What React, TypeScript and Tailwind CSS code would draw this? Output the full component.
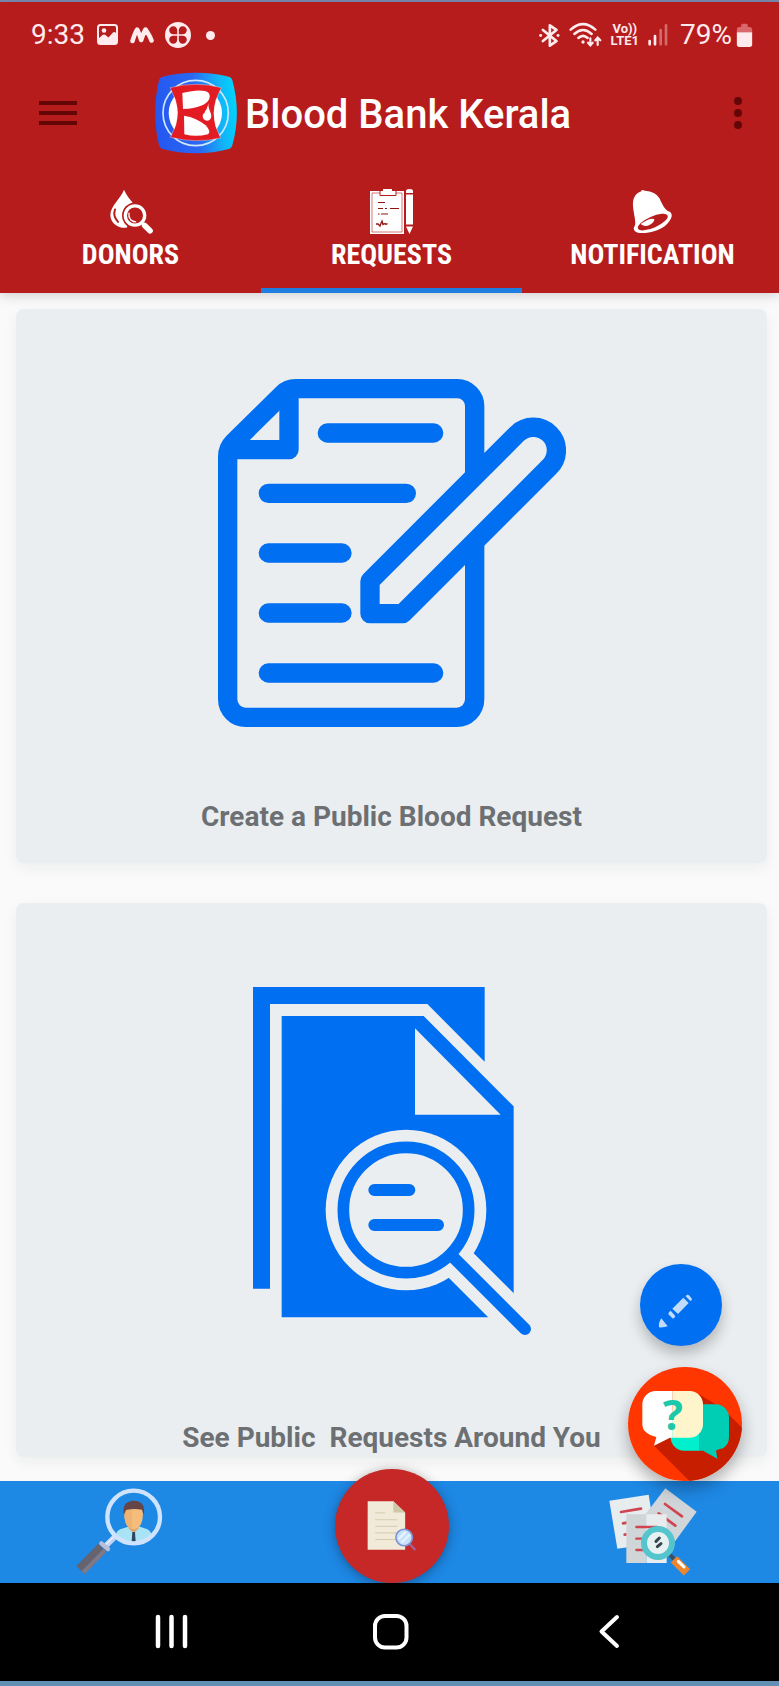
import type { ReactNode } from "react";

function PictureIcon() {
  return (
    <svg viewBox="0 0 22 22" className="size-[22px]" aria-hidden="true">
      <rect x="1" y="1" width="19" height="19" rx="2.5" fill="none" stroke="#ffebee" strokeWidth="2" />
      <path d="M1 1h19v10l-2-2.500c-1-1-2-.5-3 .5l-3.500 4-3-2.500c-1-1-2-.5-3 .5L1 14z" fill="none" />
      <path d="M1 20v-5l4.500-4c1-.8 2-.8 3 0l3 2.500 4-4.500c1-1 2-1.500 3-.5l1.500 1.500v10z" fill="#ffebee" transform="translate(0 0)" />
      <circle cx="7" cy="6.500" r="2.300" fill="#ffebee" />
    </svg>
  );
}

function WaveIcon() {
  return (
    <svg viewBox="0 0 24 20" className="h-5 w-6" aria-hidden="true">
      <path d="M2.500 16C4 11 5.500 7 7.200 4.500c1.500 3 2.800 6.500 4 10.500C12.500 11 14 7 15.500 4.500 17.500 7.500 20 11 21.500 15.500" fill="none" stroke="#ffebee" strokeWidth="4.500" strokeLinecap="round" strokeLinejoin="round" />
    </svg>
  );
}

function CloverIcon() {
  return (
    <svg viewBox="0 0 26 26" className="size-[26px]" aria-hidden="true">
      <circle cx="13" cy="13" r="13" fill="#ffebee" />
      <g fill="#b71c1c">
        <path d="M12.200 12.200H8.500A4 4 0 1 1 12.200 8.500z" />
        <path d="M13.800 12.200V8.500A4 4 0 1 1 17.500 12.200z" />
        <path d="M12.200 13.800V17.500A4 4 0 1 1 8.500 13.800z" />
        <path d="M13.800 13.800H17.500A4 4 0 1 1 13.800 17.500z" />
      </g>
    </svg>
  );
}

function BluetoothIcon() {
  return (
    <svg viewBox="462 72 62 70" className="h-[23px] w-[21px]" aria-hidden="true">
      <path d="M473 90L514 124 494 138V76L514 90 473 124" fill="none" stroke="#ffebee" strokeWidth="8" strokeLinejoin="round" strokeLinecap="round" />
      <circle cx="466" cy="107" r="4.500" fill="#ffebee" />
      <circle cx="519" cy="107" r="4.500" fill="#ffebee" />
    </svg>
  );
}

function WifiIcon() {
  return (
    <svg viewBox="553 66 99 78" className="h-[26px] w-[33px]" aria-hidden="true">
      <g fill="none" stroke="#ffebee" strokeWidth="7.500" strokeLinecap="round">
        <path d="M558 89Q595 56 632 89" />
        <path d="M569 102Q595 78 621 102" />
        <path d="M581 114Q595 101 609 114" />
      </g>
      <circle cx="595" cy="126" r="5" fill="#ffebee" />
      <path d="M617 115v20M610 128l7 8 7-8M639 135v-20M632 121l7-8 8 8" fill="none" stroke="#ffebee" strokeWidth="6.500" strokeLinecap="round" />
    </svg>
  );
}

function SignalIcon() {
  return (
    <svg viewBox="782 74 60 66" className="h-[22px] w-5" aria-hidden="true">
      <g strokeWidth="8" strokeLinecap="round" stroke="#ffebee">
        <path d="M787 125v10M803 110v25" />
        <path d="M820 92v43M836 78v57" opacity=".38" />
      </g>
    </svg>
  );
}

function BatteryIcon() {
  return (
    <svg viewBox="1044 68 50 72" className="h-6 w-[17px]" aria-hidden="true">
      <path d="M1046 96V88q0-8 8-8h5v-5q0-5 5-5h10q5 0 5 5v5h5q8 0 8 8v8z" fill="#d9686b" />
      <path d="M1046 96h46v36q0 8-8 8h-30q-8 0-8-8z" fill="#ffebee" />
    </svg>
  );
}

function LogoIcon() {
  return (
    <svg viewBox="465 215 246 246" className="size-[82px] shrink-0" role="img" aria-label="Blood Bank Kerala logo">
      <defs>
        <linearGradient id="logo-bg" x1="0" x2="1" y1=".55" y2=".45">
          <stop offset="0" stopColor="#2457f0" />
          <stop offset=".5" stopColor="#2a68f2" />
          <stop offset=".8" stopColor="#12b4f8" />
          <stop offset="1" stopColor="#00d4ff" />
        </linearGradient>
      </defs>
      <path d="M485 230Q588 205 689 230 695 232 697 240 724 338 697 435 695 443 689 445 588 472 485 445 479 443 477 435 454 338 477 240 479 232 485 230z" fill="url(#logo-bg)" />
      <circle cx="587" cy="338" r="98" fill="none" stroke="#cfe6ff" strokeWidth="5" />
      <circle cx="586" cy="338" r="80" fill="#fff" />
      <path d="M510 262Q588 242 664 262 620 338 662 413 588 430 511 411 555 338 510 262z" fill="#e31b23" stroke="#fff" strokeOpacity=".5" strokeWidth="2" />
      <path d="M547 278Q590 267 615 272 633 276 628 295 617 322 549 326z" fill="#fff" />
      <path d="M552 346Q590 352 617 375 634 393 624 402 588 411 553 402z" fill="#fff" />
      <path d="M625 308C623 328 609 336 608 347A13 14 0 0 0 634 348C634 335 624 327 625 308z" fill="#fff" />
      <path d="M611 340q3-10 9-16" stroke="#e31b23" strokeWidth="3" fill="none" />
    </svg>
  );
}

function DonorsIcon() {
  return (
    <svg viewBox="326 60 132 134" className="h-[45px] w-11" aria-hidden="true">
      <path d="M371 62C362 88 330 110 330 138A41 39 0 0 0 380 175L398 102C388 90 378 78 371 62z" fill="#fff" />
      <path d="M344 121q-7 20 9 37" stroke="#b71c1c" strokeWidth="6" fill="none" strokeLinecap="round" />
      <circle cx="404" cy="139" r="39" fill="#b71c1c" />
      <circle cx="404" cy="139" r="29" fill="none" stroke="#fff" strokeWidth="10" />
      <path d="M386 132q-3 22 20 26M391 152l10 6" stroke="#fff" strokeWidth="4" fill="none" strokeLinecap="round" />
      <path d="M426 161l9 9" stroke="#fff" strokeWidth="8" />
      <path d="M433 169l16 16" stroke="#fff" strokeWidth="17" strokeLinecap="round" />
    </svg>
  );
}

function ClipboardIcon() {
  return (
    <svg viewBox="0 0 44 45" className="h-[45px] w-11" aria-hidden="true">
      <path d="M0 2h34v43H0z" fill="#fff" />
      <path d="M2 4h30v39H2z" fill="none" stroke="#b71c1c" strokeWidth=".6" />
      <path d="M10 1.500h16v5H10z" fill="#fff" stroke="#b71c1c" strokeWidth="1" />
      <path d="M13 0h9v4h-9z" fill="#fff" />
      <path d="M8 13.500h7M8 19.500h5M15 19.500h2M20 19.500h9M8 25h1.500M11 25h7" stroke="#8f1515" strokeWidth="1.100" />
      <path d="M6 35h2l2 2q1-3 2-5l1 3.500 2-1 1 1 1.500-1" fill="none" stroke="#8f1515" strokeWidth="1.300" />
      <path d="M36 2q0-2 3.500-2T43 2v2h-7zM36 5.500h7v30h-7zM36 37.500h7L39.500 45z" fill="#fff" />
    </svg>
  );
}

function BellIcon() {
  return (
    <svg viewBox="729 60 124 136" className="h-[45px] w-[41px]" aria-hidden="true">
      <path d="M755 68Q758 60 768 65 800 67 812 88C822 108 828 124 843 129 855 138 848 152 835 166 815 187 780 195 750 193 735 191 731 180 737 172 744 160 730 125 732 100 734 82 743 71 755 68z" fill="#fff" />
      <ellipse cx="792" cy="160" rx="49" ry="17" transform="rotate(-24 792 160)" fill="#b71c1c" />
      <path d="M755 166Q785 145 796 151 798 160 782 169 768 176 755 166z" fill="#fff" />
    </svg>
  );
}

function WriteDocumentIcon() {
  return (
    <svg viewBox="54 56 1044 1044" className="size-[348px]" aria-hidden="true">
      <g fill="none" stroke="#006ff2" strokeWidth="58" strokeLinejoin="round">
        <path d="M824 350V137A52 52 0 0 0 772 85H287Q264 85 248 101L100 247Q83 264 83 289V1017A54 54 0 0 0 137 1071H770A54 54 0 0 0 824 1017V550" />
        <path d="M267 90V268H90" />
        <path d="M510 662V760H608L1049 319A69 69 0 0 0 951 221z" />
        <path strokeLinecap="round" d="M382 218H701M205 399H619M205 578H426M205 758H426M205 938H701" />
      </g>
    </svg>
  );
}

function SearchDocumentIcon() {
  return (
    <svg viewBox="69 51 834 1044" className="h-[348px] w-[278px]" aria-hidden="true">
      <path d="M69 51H764V275L592 102H120V956H69z" fill="#006ff2" />
      <path d="M155 138H581L851 409V1042H155z" fill="#006ff2" />
      <path d="M555 175L812 434H555z" fill="#eaeef1" />
      <circle cx="528" cy="720" r="241" fill="#eaeef1" />
      <path d="M640 833L903 1096" stroke="#eaeef1" strokeWidth="105" />
      <circle cx="528" cy="720" r="188" fill="none" stroke="#006ff2" strokeWidth="35" />
      <path d="M666 858L885 1077M433 660H538M433 765H624" stroke="#006ff2" strokeWidth="36" strokeLinecap="round" />
    </svg>
  );
}

function PencilIcon() {
  return (
    <svg viewBox="175 161 102 102" className="size-[34px]" aria-hidden="true">
      <g fill="#c0dcfa">
        <path d="M185 234L204 258Q192 262 178 261 176 246 185 234z" />
        <path d="M213 211q-7 4-7 11l14 13q6-3 7-8z" />
        <path d="M251 172L267 188 235 221 218 205z" />
        <path d="M258 168q4-7 10-3l7 8q4 5-3 9z" />
      </g>
    </svg>
  );
}

function ChatIcon() {
  return (
    <svg viewBox="85 378 342 342" className="size-full" aria-hidden="true">
      <defs>
        <clipPath id="chat-disc"><circle cx="256" cy="549" r="171" /></clipPath>
      </defs>
      <g clipPath="url(#chat-disc)">
        <path d="M85 378h342v342H85z" fill="#ff3600" />
        <path d="M163 614L275 726H427V560L370 503 298 460z" fill="#c81e00" />
      </g>
      <path d="M300 490H253A40 40 0 0 0 213 530V589A40 40 0 0 0 253 629H300z" fill="#00f0cd" />
      <path d="M300 490H348A40 40 0 0 1 388 530V589Q388 610 370 622 349 627 349 629L353 653 310 629H300z" fill="#00ceb4" />
      <path d="M219 450H168A40 40 0 0 0 128 490V550Q128 578 170 588L163 614 211 590H219z" fill="#fff" />
      <path d="M219 450H270A40 40 0 0 1 310 490V550A40 40 0 0 1 270 590H219z" fill="#fff5cc" />
      <text x="219" y="566" textAnchor="middle" fontFamily="'Noto Sans', sans-serif" fontWeight="700" fontSize="126" fill="#1cc8aa">?</text>
    </svg>
  );
}

function FindPersonIcon() {
  return (
    <svg viewBox="227 85 264 264" className="size-[88px]" aria-hidden="true">
      <path d="M350 228L318 260" stroke="#c5d3f0" strokeWidth="17" />
      <path d="M350 224L320 254" stroke="#e3ecfd" strokeWidth="5" />
      <path d="M309 264L243 331" stroke="#65636f" strokeWidth="34" strokeLinecap="butt" />
      <path d="M317 272L251 339" stroke="#7d7988" strokeWidth="13" />
      <path d="M306 251L326 268" stroke="#b8bdd8" strokeWidth="13" strokeLinecap="round" />
      <path d="M350 223Q354 209 373 206L390 200H418L435 206Q452 210 456 222 437 250 403 250 370 249 350 223z" fill="#a9e4f6" />
      <path d="M388 195h30v12l-15 12-15-12z" fill="#e0a467" />
      <path d="M399 217h8l2 29h-12z" fill="#2f4760" />
      <path d="M376 150Q377 139 403 139T430 150Q435 203 403 209 371 203 376 150z" fill="#f4bd7c" />
      <path d="M376 150Q378 139 398 139V208Q371 202 376 150z" fill="#eeb272" />
      <path d="M374 165Q366 125 403 123 441 124 433 165L428 150Q403 145 380 151z" fill="#664549" />
      <circle cx="403" cy="172" r="79" fill="none" stroke="#cfe3fc" strokeWidth="13" />
    </svg>
  );
}

function PageIcon() {
  return (
    <svg viewBox="201 182 150 152" className="size-[50px]" aria-hidden="true">
      <path d="M202 183H280L316 217V330H202z" fill="#f1ead9" />
      <path d="M280 183L316 217H280z" fill="#d0c7a9" />
      <path d="M225 218H255M225 239H292M225 259H292M225 279H292M225 299H288" stroke="#d2ccb0" strokeWidth="3" />
      <path d="M330 313L347 331" stroke="#a367a6" strokeWidth="6" />
      <circle cx="313" cy="293" r="25" fill="#c7e1fb" stroke="#7d93d4" strokeWidth="5" />
      <path d="M296 298L317 276M305 309L331 283" stroke="#e5f3ff" strokeWidth="7" />
    </svg>
  );
}

function ReportsIcon() {
  return (
    <svg viewBox="146 56 264 264" className="size-[88px]" aria-hidden="true">
      <path d="M147 94L265 76 288 221 171 238z" fill="#e7ecef" />
      <path d="M182 128L242 118M188 162L238 153M193 196L235 189" stroke="#cf4550" strokeWidth="8" strokeLinecap="round" />
      <path d="M315 57L409 127 334 230 236 160z" fill="#cfd5d8" />
      <path d="M314 104L365 141M295 132L345 169" stroke="#cf4550" strokeWidth="8" strokeLinecap="round" />
      <path d="M198 135H258V281H198z" fill="#d0d5d8" />
      <path d="M258 135H319V281H258z" fill="#e8eced" />
      <path d="M228 173H290M228 208H280M228 242H280" stroke="#cf4550" strokeWidth="7" strokeLinecap="round" />
      <path d="M328 256L341 269" stroke="#405057" strokeWidth="12" />
      <path d="M341 270L380 309" stroke="#ee8630" strokeWidth="27" />
      <path d="M354 276L371 293" stroke="#fff" strokeWidth="9" strokeLinecap="round" />
      <circle cx="293" cy="221" r="42" fill="#e8f1f2" stroke="#54c4cd" strokeWidth="18" />
      <path d="M287 216L297 206M291 232L302 223" stroke="#34454c" strokeWidth="9" strokeLinecap="round" />
    </svg>
  );
}

function StatusBar() {
  return (
    <div className="flex h-[66px] items-center pl-[31px] pr-[26px] text-[28px] leading-8 text-[#ffebee]">
      <span>9:33</span>
      <div className="ml-3 flex items-center gap-[11px]">
        <PictureIcon />
        <WaveIcon />
        <CloverIcon />
        <span className="ml-1 size-[9px] rounded-full bg-[#ffebee]" />
      </div>
      <div className="ml-auto flex items-center gap-2">
        <div className="mr-1 flex items-center gap-[9px]">
          <BluetoothIcon />
          <WifiIcon />
          <div className="flex flex-col items-center text-[13px] font-bold leading-3">
            <span>Vo))</span>
            <span>LTE1</span>
          </div>
          <SignalIcon />
        </div>
        <div className="flex items-center gap-1">
          <span>79%</span>
          <BatteryIcon />
        </div>
      </div>
    </div>
  );
}

function Tab({ label, icon, active = false }: { label: string; icon: ReactNode; active?: boolean }) {
  return (
    <button type="button" role="tab" aria-selected={active} className="relative flex flex-col items-center gap-[5px] pb-[22px] pt-[30px]">
      {icon}
      <span className="font-['Roboto_Condensed','Roboto',sans-serif] text-[28px] font-bold leading-8">{label}</span>
      {active && <span className="absolute inset-x-0 bottom-0 h-[5px] bg-[#1e7fe0]" />}
    </button>
  );
}

function ActionCard({ label, children, spacing }: { label: string; children: ReactNode; spacing: string }) {
  return (
    <button type="button" className={`flex min-h-[554px] w-full flex-col items-center rounded-lg bg-[#eaeef1] shadow-[0_5px_14px_rgba(0,40,30,0.06)] ${spacing}`}>
      {children}
      <span className="whitespace-pre text-[28px] font-bold leading-9 text-[#6d7073]">{label}</span>
    </button>
  );
}

export default function App() {
  return (
    <div className="flex min-h-screen flex-col border-b-[5px] border-t-2 border-b-[#6290b5] border-t-[#7b8bb0] bg-[#fafafa] font-['Roboto',sans-serif]">
      <header className="z-10 bg-[#b71c1c] text-white shadow-[0_2px_12px_rgba(0,0,0,0.18)]">
        <StatusBar />
        <div className="flex h-[90px] items-center pl-[39px] pr-[31px]">
          <button type="button" aria-label="Open menu" className="flex w-[38px] flex-col gap-[6px]">
            <span className="h-1 bg-[#650606]" />
            <span className="h-1 bg-[#650606]" />
            <span className="h-1 bg-[#650606]" />
          </button>
          <div className="ml-[78px] flex items-center gap-2">
            <LogoIcon />
            <h1 className="whitespace-nowrap pt-1 text-[40px] font-medium leading-[48px]">Blood Bank Kerala</h1>
          </div>
          <button type="button" aria-label="More options" className="ml-auto flex w-5 flex-col items-center gap-1">
            <span className="size-2 rounded-full bg-[#650606]" />
            <span className="size-2 rounded-full bg-[#650606]" />
            <span className="size-2 rounded-full bg-[#650606]" />
          </button>
        </div>
        <div className="overflow-hidden pt-px">
          <div role="tablist" className="-mr-1 grid grid-cols-3">
            <Tab label="DONORS" icon={<DonorsIcon />} />
            <Tab label="REQUESTS" icon={<ClipboardIcon />} active />
            <Tab label="NOTIFICATION" icon={<BellIcon />} />
          </div>
        </div>
      </header>

      <main className="relative flex flex-1 flex-col gap-10 pb-[23px] pl-4 pr-3 pt-4">
        <ActionCard label="Create a Public Blood Request" spacing="gap-[72px] pt-[70px]">
          <WriteDocumentIcon />
        </ActionCard>
        <ActionCard label="See Public  Requests Around You" spacing="gap-[85px] pt-[84px]">
          <SearchDocumentIcon />
        </ActionCard>
        <div className="absolute bottom-0 right-[37px] z-10 flex flex-col items-center gap-[21px]">
          <button type="button" aria-label="Write" className="mr-2 flex size-[82px] items-center justify-center rounded-full bg-[#006ff2] pr-3 pt-3 shadow-[0_8px_14px_rgba(0,0,0,0.24)]">
            <PencilIcon />
          </button>
          <button type="button" aria-label="Ask a question" className="size-[114px] rounded-full shadow-[0_8px_16px_rgba(0,0,0,0.3)]">
            <ChatIcon />
          </button>
        </div>
      </main>

      <nav aria-label="Sections" className="relative flex h-[102px] items-center justify-between bg-[#1e88e5] pl-[75px] pr-[82px]">
        <button type="button" aria-label="Find donors"><FindPersonIcon /></button>
        <div className="absolute bottom-0 left-1 right-0 flex justify-center">
          <button type="button" aria-label="Requests" className="flex size-[114px] items-center justify-center rounded-full bg-[#c62828] shadow-[0_2px_12px_rgba(0,0,0,0.35)]">
            <PageIcon />
          </button>
        </div>
        <button type="button" aria-label="Reports"><ReportsIcon /></button>
      </nav>

      <nav aria-label="System" className="flex h-[98px] items-center justify-between bg-black pl-[154px] pr-[152px]">
        <button type="button" aria-label="Recent apps">
          <svg viewBox="0 0 36 36" className="size-9" aria-hidden="true"><path d="M4 3v29M17.500 3v29M31 3v29" stroke="#fff" strokeWidth="4.500" strokeLinecap="round" /></svg>
        </button>
        <button type="button" aria-label="Home">
          <svg viewBox="0 0 36 36" className="size-9" aria-hidden="true"><rect x="2" y="2" width="31.500" height="31.500" rx="10" fill="none" stroke="#fff" strokeWidth="4" /></svg>
        </button>
        <button type="button" aria-label="Back">
          <svg viewBox="0 0 36 36" className="size-9" aria-hidden="true"><path d="M26 3L10.500 17.500 26 32" fill="none" stroke="#fff" strokeWidth="4" strokeLinecap="round" strokeLinejoin="round" /></svg>
        </button>
      </nav>
    </div>
  );
}
